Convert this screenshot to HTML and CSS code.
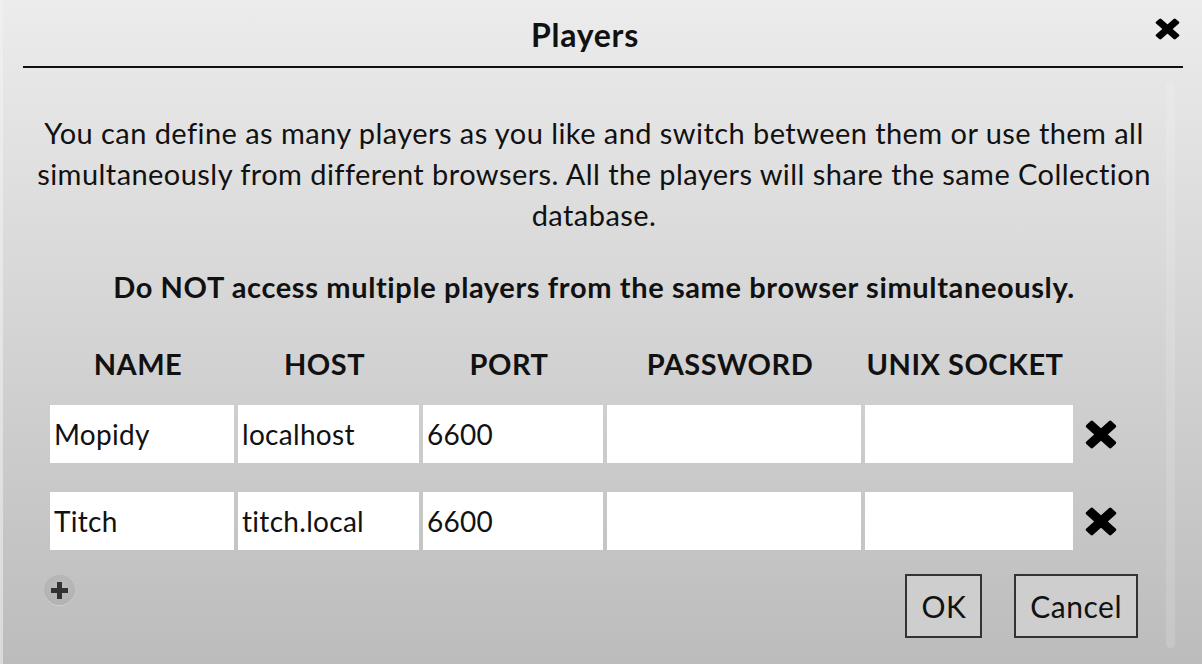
FILE: index.html
```html
<!DOCTYPE html>
<html lang="en">
<head>
<meta charset="utf-8">
<title>Players</title>
<link rel="stylesheet" href="styles.css">
</head>
<body>
<div class="page">
  <div class="edge"></div>
  <div class="dialog">
    <header class="dlg-head">
      <h1 class="title">Players</h1>
      <button class="close" aria-label="Close">
        <svg viewBox="0 0 100 100" preserveAspectRatio="none" width="25" height="22"><rect x="-5.7" y="35" width="111.4" height="30" rx="6" transform="rotate(45 50 50)"/><rect x="-5.7" y="35" width="111.4" height="30" rx="6" transform="rotate(-45 50 50)"/></svg>
      </button>
    </header>
    <div class="dlg-body">
      <div class="content">
        <p class="intro">You can define as many players as you like and switch between them or use them all simultaneously from different browsers. All the players will share the same Collection database.</p>
        <p class="warn">Do NOT access multiple players from the same browser simultaneously.</p>
        <div class="players">
          <div class="th">NAME</div>
          <div class="th">HOST</div>
          <div class="th">PORT</div>
          <div class="th">PASSWORD</div>
          <div class="th">UNIX SOCKET</div>
          <div class="th"></div>

          <input class="field" type="text" value="Mopidy">
          <input class="field" type="text" value="localhost">
          <input class="field" type="text" value="6600">
          <input class="field" type="password" value="">
          <input class="field" type="text" value="">
          <button class="del" aria-label="Remove">
            <svg viewBox="0 0 100 100" preserveAspectRatio="none" width="32" height="29"><rect x="-5.7" y="35" width="111.4" height="30" rx="6" transform="rotate(45 50 50)"/><rect x="-5.7" y="35" width="111.4" height="30" rx="6" transform="rotate(-45 50 50)"/></svg>
          </button>

          <input class="field" type="text" value="Titch">
          <input class="field" type="text" value="titch.local">
          <input class="field" type="text" value="6600">
          <input class="field" type="password" value="">
          <input class="field" type="text" value="">
          <button class="del" aria-label="Remove">
            <svg viewBox="0 0 100 100" preserveAspectRatio="none" width="32" height="29"><rect x="-5.7" y="35" width="111.4" height="30" rx="6" transform="rotate(45 50 50)"/><rect x="-5.7" y="35" width="111.4" height="30" rx="6" transform="rotate(-45 50 50)"/></svg>
          </button>
        </div>
        <div class="footer">
          <button class="add" aria-label="Add player">
            <svg viewBox="0 0 17 17" width="17" height="17"><rect x="6" y="0" width="5" height="17"/><rect x="0" y="6" width="17" height="5"/></svg>
          </button>
          <div class="actions">
            <button class="btn btn-ok">OK</button>
            <button class="btn btn-cancel">Cancel</button>
          </div>
        </div>
      </div>
      <div class="scrollbar"></div>
    </div>
  </div>
</div>
</body>
</html>
```
FILE: styles.css
```css
html, body {
  margin: 0;
  height: 664px;
  overflow: hidden;
}

body {
  font-family: Lato, "Noto Sans", sans-serif;
  color: #111;
  background: linear-gradient(#ececec, #bcbcbc);
}

.page {
  display: flex;
  height: 664px;
}

.edge {
  width: 3px;
  background: linear-gradient(#f0f0f0, #dadada);
}

.dialog {
  flex: 1;
  display: flex;
  flex-direction: column;
  padding: 0 19px 0 20px;
}

.dlg-head {
  display: flex;
  align-items: center;
  height: 66px;
  border-bottom: 2px solid #111;
}

.title {
  flex: 1;
  margin: 0;
  padding: 3px 8px 0 0;
  text-align: center;
  font-size: 32px;
  letter-spacing: 0.7px;
  font-weight: 700;
}

.close {
  align-self: flex-start;
  margin: 18px 3px 0 0;
  padding: 0;
  border: 0;
  background: none;
  width: 25px;
  height: 22px;
  line-height: 0;
}

.close svg, .del svg {
  fill: #000;
  display: block;
}

.dlg-body {
  flex: 1;
  display: flex;
}

.content {
  flex: 1;
  display: flex;
  flex-direction: column;
}

.intro {
  margin: 44px 0 0;
  font-size: 29px;
  letter-spacing: 0.44px;
  line-height: 41px;
  text-align: center;
}

.warn {
  margin: 31px 0 0;
  font-size: 29px;
  letter-spacing: 0.62px;
  line-height: 41px;
  font-weight: 700;
  text-align: center;
}

.players {
  display: grid;
  grid-template-columns: 184px 181px 180px 254px 208px 40px;
  column-gap: 4px;
  row-gap: 29px;
  margin: 45px 0 0 27px;
}

.th {
  font-size: 29px;
  letter-spacing: 0.5px;
  line-height: 24px;
  font-weight: 700;
  text-align: center;
  padding-right: 8px;
}

.field {
  box-sizing: border-box;
  width: 100%;
  height: 58px;
  margin: 0;
  padding: 0 4px;
  border: 0;
  outline: none;
  background: #fff;
  font-family: inherit;
  font-size: 28px;
  letter-spacing: 0.3px;
  color: #111;
}

.del {
  align-self: center;
  justify-self: start;
  margin-left: 8px;
  padding: 0;
  border: 0;
  background: none;
  width: 32px;
  height: 29px;
  line-height: 0;
}

.footer {
  display: flex;
  justify-content: space-between;
  align-items: flex-start;
  margin-top: 24px;
  padding: 0 27px 0 21px;
}

.add {
  width: 31px;
  height: 31px;
  margin-top: 1px;
  padding: 0;
  border: 0;
  border-radius: 50%;
  background: radial-gradient(circle at 50% 40%, #bcbcbc 0%, #b4b4b4 60%, #a9a9a9 100%);
  box-shadow: 0 -1px 0 #d2d2d2 inset;
  display: flex;
  align-items: center;
  justify-content: center;
}

.add svg {
  fill: #333;
  display: block;
}

.actions {
  display: flex;
  gap: 32px;
}

.btn {
  height: 64px;
  margin: 0;
  border: 2px solid #333;
  background: #cecece;
  font-family: inherit;
  font-size: 30px;
  letter-spacing: 0.5px;
  color: #111;
  padding: 0 14px;
}

.scrollbar {
  width: 9px;
  margin: 15px 8px 16px 1px;
  border-radius: 5px;
  background: rgba(255, 255, 255, 0.14);
}
```
